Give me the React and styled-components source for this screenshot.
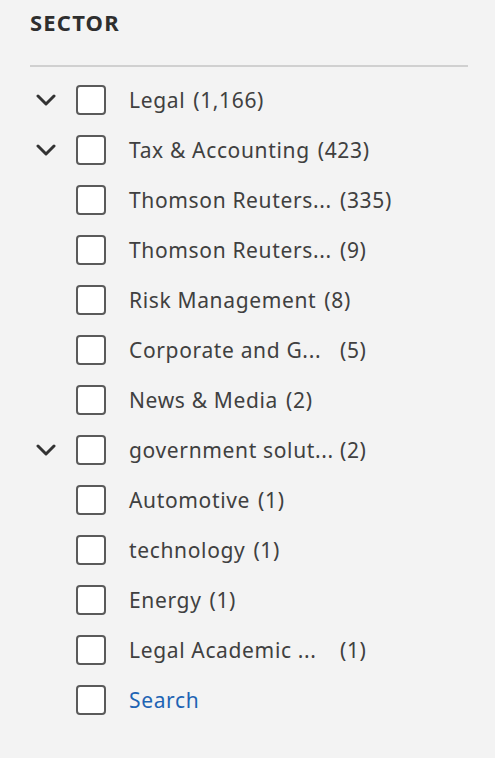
import React from "react";
import styled, { createGlobalStyle } from "styled-components";

const Global = createGlobalStyle`
  html, body { margin: 0; padding: 0; background: #f3f3f3; }
  body { font-family: "Noto Sans", "Open Sans", sans-serif; }
`;

const Panel = styled.section`
  width: 495px;
  min-height: 758px;
  box-sizing: border-box;
  padding: 6px 27px 0 30px;
  background: #f3f3f3;
`;

const Title = styled.h2`
  margin: 0;
  font-size: 22px;
  font-weight: 700;
  color: #2e2e2e;
  line-height: 32px;
  letter-spacing: 1.2px;
`;

const Divider = styled.hr`
  margin: 27px 0 8px;
  border: 0;
  border-top: 2px solid #d0d0d0;
`;

const List = styled.ul`
  list-style: none;
  margin: 0;
  padding: 0;
`;

const Row = styled.li`
  display: flex;
  align-items: center;
  height: 50px;
`;

const ChevronSlot = styled.span`
  width: 46px;
  display: flex;
  align-items: center;
  padding-left: 6px;
  box-sizing: border-box;
`;

const Box = styled.span`
  width: 30px;
  height: 30px;
  box-sizing: border-box;
  border: 2px solid #5a5a5a;
  border-radius: 4px;
  background: #fff;
  flex: none;
`;

const Label = styled.span`
  margin-left: 23px;
  display: flex;
  align-items: center;
  font-size: 21px;
  letter-spacing: 0.65px;
  color: ${(p) => (p.$link ? "#1e64b4" : "#404040")};
`;

const Name = styled.span`
  white-space: nowrap;
  ${(p) => p.$clip && "width: 203px;"}
`;

const Count = styled.span`
  margin-left: 8px;
`;

const Chevron = () => (
  <svg width="20" height="12" viewBox="0 0 20 12">
    <path d="M2 2 L10 10 L18 2" fill="none" stroke="#333" strokeWidth="3" strokeLinecap="round" strokeLinejoin="round" />
  </svg>
);

const items = [
  { name: "Legal", count: "(1,166)", exp: true },
  { name: "Tax & Accounting", count: "(423)", exp: true },
  { name: "Thomson Reuters...", count: "(335)", clip: true },
  { name: "Thomson Reuters...", count: "(9)", clip: true },
  { name: "Risk Management", count: "(8)" },
  { name: "Corporate and G...", count: "(5)", clip: true },
  { name: "News & Media", count: "(2)" },
  { name: "government solut...", count: "(2)", exp: true, clip: true },
  { name: "Automotive", count: "(1)" },
  { name: "technology", count: "(1)" },
  { name: "Energy", count: "(1)" },
  { name: "Legal Academic ...", count: "(1)", clip: true },
];

export default function App() {
  return (
    <>
      <Global />
      <Panel>
        <Title>SECTOR</Title>
        <Divider />
        <List>
          {items.map((it, i) => (
            <Row key={i}>
              <ChevronSlot>{it.exp && <Chevron />}</ChevronSlot>
              <Box />
              <Label>
                <Name $clip={it.clip}>{it.name}</Name>
                <Count>{it.count}</Count>
              </Label>
            </Row>
          ))}
          <Row>
            <ChevronSlot />
            <Box />
            <Label $link>Search</Label>
          </Row>
        </List>
      </Panel>
    </>
  );
}
